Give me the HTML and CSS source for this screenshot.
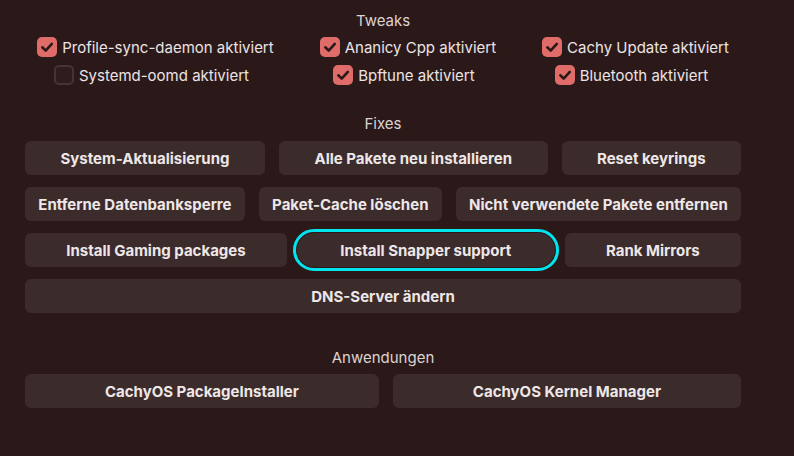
FILE: index.html
```html
<!DOCTYPE html>
<html lang="de">
<head>
<meta charset="utf-8">
<title>CachyOS Hello</title>
<link rel="stylesheet" href="styles.css">
</head>
<body>
<div class="page">
  <div class="section-title tweaks-title">Tweaks</div>
  <div class="checks">
    <label class="check"><span class="box on"><svg viewBox="0 0 20 20"><path d="M5.3 10.3 L8.7 13.6 L14.8 6.9"/></svg></span><span>Profile-sync-daemon aktiviert</span></label>
    <label class="check"><span class="box on"><svg viewBox="0 0 20 20"><path d="M5.3 10.3 L8.7 13.6 L14.8 6.9"/></svg></span><span>Ananicy Cpp aktiviert</span></label>
    <label class="check"><span class="box on"><svg viewBox="0 0 20 20"><path d="M5.3 10.3 L8.7 13.6 L14.8 6.9"/></svg></span><span>Cachy Update aktiviert</span></label>
    <label class="check second"><span class="box"></span><span>Systemd-oomd aktiviert</span></label>
    <label class="check second"><span class="box on"><svg viewBox="0 0 20 20"><path d="M5.3 10.3 L8.7 13.6 L14.8 6.9"/></svg></span><span>Bpftune aktiviert</span></label>
    <label class="check second"><span class="box on"><svg viewBox="0 0 20 20"><path d="M5.3 10.3 L8.7 13.6 L14.8 6.9"/></svg></span><span>Bluetooth aktiviert</span></label>
  </div>

  <div class="section-title fixes-title">Fixes</div>
  <div class="buttons">
    <div class="row">
      <button class="btn">System-Aktualisierung</button>
      <button class="btn">Alle Pakete neu installieren</button>
      <button class="btn">Reset keyrings</button>
    </div>
    <div class="row">
      <button class="btn">Entferne Datenbanksperre</button>
      <button class="btn">Paket-Cache löschen</button>
      <button class="btn">Nicht verwendete Pakete entfernen</button>
    </div>
    <div class="row row-focus">
      <button class="btn">Install Gaming packages</button>
      <button class="btn focused">Install Snapper support</button>
      <button class="btn">Rank Mirrors</button>
    </div>
    <div class="row">
      <button class="btn">DNS-Server ändern</button>
    </div>
  </div>

  <div class="section-title apps-title">Anwendungen</div>
  <div class="row apps">
    <button class="btn app-left">CachyOS PackageInstaller</button>
    <button class="btn app-right">CachyOS Kernel Manager</button>
  </div>
</div>
</body>
</html>
```
FILE: styles.css
```css
html, body {
  margin: 0;
  padding: 0;
  background: #2b1919;
}
body {
  width: 794px;
  height: 456px;
  overflow: hidden;
  font-family: Inter, "Noto Sans", sans-serif;
  color: #e9e1e1;
}
.page {
  width: 716px;
  margin-left: 25px;
  display: flex;
  flex-direction: column;
}
.section-title {
  text-align: center;
  font-size: 15px;
  line-height: 18px;
  color: #ddd3d3;
}
.tweaks-title { margin-top: 12px; }
.fixes-title { margin-top: 30px; }
.apps-title { margin-top: 36px; }

.checks {
  margin-top: 7px;
  display: grid;
  grid-template-columns: repeat(3, auto);
  justify-content: center;
  justify-items: center;
  column-gap: 46px;
  row-gap: 8px;
}
.check {
  display: flex;
  align-items: center;
  gap: 5px;
  height: 20px;
  font-size: 15px;
  color: #ece4e4;
}
.check.second { margin-right: 8px; }
.box {
  flex: 0 0 20px;
  width: 20px;
  height: 20px;
  box-sizing: border-box;
  border-radius: 5px;
  border: 2px solid #453434;
  background: #2e1d1d;
  display: flex;
  align-items: center;
  justify-content: center;
}
.box.on {
  border: none;
  background: #e06c69;
}
.box svg {
  width: 20px;
  height: 20px;
}
.box svg path {
  fill: none;
  stroke: #2b1919;
  stroke-width: 2.6;
  stroke-linecap: round;
  stroke-linejoin: round;
}

.buttons {
  margin-top: 8px;
  display: flex;
  flex-direction: column;
  gap: 12px;
}
.row {
  display: flex;
  gap: 14px;
}
.row-focus { gap: 10px; }
.btn {
  flex: 1 1 auto;
  height: 34px;
  padding: 0 10px;
  border: none;
  border-radius: 6px;
  background: #3c2b2b;
  color: #eee7e7;
  font-family: Inter, "Noto Sans", sans-serif;
  font-size: 15px;
  font-weight: 700;
  white-space: nowrap;
}
.btn.focused {
  padding: 0 12px;
  border-radius: 17px;
  outline: 3px solid #00e4ee;
  outline-offset: 1px;
}
.apps { margin-top: 7px; }
.app-left { flex: 354 1 0; }
.app-right { flex: 348 1 0; }
```
